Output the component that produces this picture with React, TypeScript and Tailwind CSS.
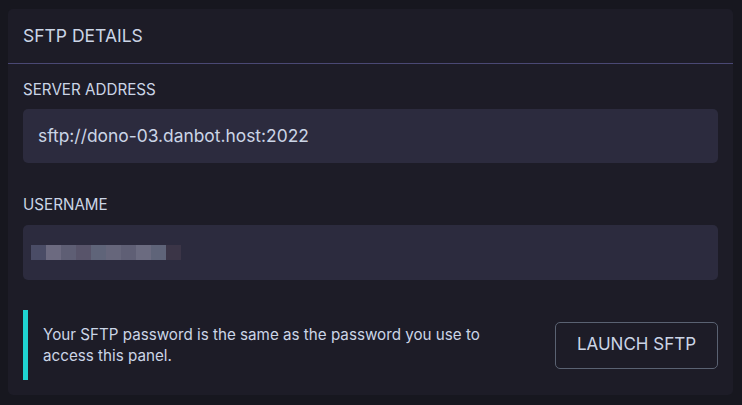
import React from 'react';

const pixels = ['#4a4c66', '#6c6a80', '#5e5e74', '#58546a', '#5f6479', '#66667b', '#5f5f75', '#6b6b80', '#5f6479', '#3b3547'];

export default function App() {
  return (
    <div className="w-[742px] h-[405px] bg-[#17171f] pt-[9px] px-[8px] font-['Inter',sans-serif] text-[#cbd5e6]">
      <div className="w-[725px] h-[386px] bg-[#1d1c27] rounded-[5px] flex flex-col">
        <div className="h-[55px] flex items-center px-[15px] border-b border-[#4a4874]">
          <h2 className="text-[17.5px] leading-none">SFTP DETAILS</h2>
        </div>
        <div className="px-[15px] pt-[17px] flex flex-col">
          <label className="text-[15.2px] leading-[18px]">SERVER ADDRESS</label>
          <div className="mt-[10px] h-[54px] rounded-[5px] bg-[#2c2b3e] flex items-center px-[15px] text-[17.4px]">
            sftp://dono-03.danbot.host:2022
          </div>
          <label className="mt-[33px] text-[15.2px] leading-[18px]">USERNAME</label>
          <div className="mt-[11px] h-[55px] rounded-[5px] bg-[#2c2b3e] flex items-center px-[8px]">
            <div className="flex">
              {pixels.map((c, i) => (
                <span key={i} className="block w-[15px] h-[15px]" style={{ background: c }} />
              ))}
            </div>
          </div>
          <div className="mt-[30px] flex items-center justify-between">
            <div className="flex items-stretch">
              <div className="w-[5px] h-[70px] bg-[#1fd3d1]" />
              <p className="pl-[15px] self-center text-[15.2px] leading-[21px] w-[470px]">
                Your SFTP password is the same as the password you use to access this panel.
              </p>
            </div>
            <button className="w-[163px] h-[47px] rounded-[5px] border border-[#5a6272] text-[17px] text-[#cbd5e6]">
              LAUNCH SFTP
            </button>
          </div>
        </div>
      </div>
    </div>
  );
}
